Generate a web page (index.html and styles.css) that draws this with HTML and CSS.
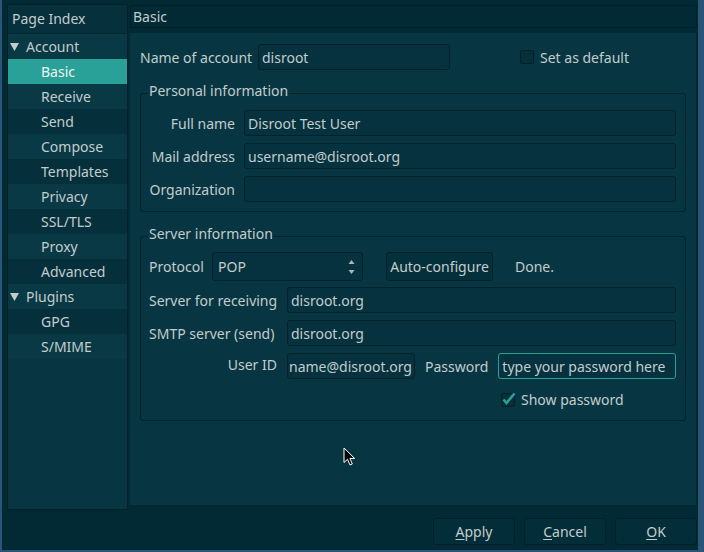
FILE: index.html
```html
<!DOCTYPE html>
<html>
<head>
<meta charset="utf-8">
<title>Account preferences</title>
<link rel="stylesheet" href="styles.css">
</head>
<body>
<div class="window">
  <div class="main">
    <div class="sidebar">
      <div class="side-head">Page Index</div>
      <div class="tree">
        <div class="row parent"><svg class="tri" width="9" height="8" viewBox="0 0 9 8"><polygon points="0,0 9,0 4.5,8" fill="#c3cccc"/></svg>Account</div>
        <div class="row child sel">Basic</div>
        <div class="row child">Receive</div>
        <div class="row child">Send</div>
        <div class="row child">Compose</div>
        <div class="row child">Templates</div>
        <div class="row child">Privacy</div>
        <div class="row child">SSL/TLS</div>
        <div class="row child">Proxy</div>
        <div class="row child">Advanced</div>
        <div class="row parent"><svg class="tri" width="9" height="8" viewBox="0 0 9 8"><polygon points="0,0 9,0 4.5,8" fill="#c3cccc"/></svg>Plugins</div>
        <div class="row child">GPG</div>
        <div class="row child">S/MIME</div>
      </div>
    </div>
    <div class="right">
      <div class="titlebar">Basic</div>
      <div class="pane">
        <div class="acct-row">
          <span class="acct-label">Name of account</span>
          <div class="input acct-input">disroot</div>
          <span class="check-wrap default-check"><span class="box"></span>Set as default</span>
        </div>

        <fieldset class="group personal">
          <legend>Personal information</legend>
          <div class="fields">
            <div class="frow"><span class="plabel">Full name</span><div class="input grow">Disroot Test User</div></div>
            <div class="frow"><span class="plabel">Mail address</span><div class="input grow">username@disroot.org</div></div>
            <div class="frow"><span class="plabel">Organization</span><div class="input grow"></div></div>
          </div>
        </fieldset>

        <fieldset class="group server">
          <legend>Server information</legend>
          <div class="srow proto-row">
            <span class="proto-label">Protocol</span>
            <div class="combo"><span>POP</span>
              <svg class="spin" width="7" height="16" viewBox="0 0 7 16"><polygon points="3.5,1 6.5,5 0.5,5" fill="#aab6b6"/><polygon points="0.5,11 6.5,11 3.5,15" fill="#aab6b6"/></svg>
            </div>
            <div class="btn auto">Auto-configure</div>
            <span class="done">Done.</span>
          </div>
          <div class="srow tight"><span class="slabel">Server for receiving</span><div class="input grow">disroot.org</div></div>
          <div class="srow"><span class="slabel">SMTP server (send)</span><div class="input grow">disroot.org</div></div>
          <div class="srow">
            <span class="slabel right">User ID</span>
            <div class="input uid">name@disroot.org</div>
            <span class="pw-label">Password</span>
            <div class="input grow focus">type your password here</div>
          </div>
          <div class="show-row">
            <span class="check-wrap"><svg class="chk" width="16" height="16" viewBox="0 0 16 16"><rect x="0.5" y="2.5" width="13" height="13" rx="2" fill="#05303b" stroke="#01202a"/><polyline points="2.5,8.5 5.5,12 13.5,2.5" fill="none" stroke="#2aa198" stroke-width="2.6"/></svg>Show password</span>
          </div>
        </fieldset>
      </div>
    </div>
  </div>
  <div class="buttons">
    <div class="btn dlg"><u>A</u>pply</div>
    <div class="btn dlg"><u>C</u>ancel</div>
    <div class="btn dlg"><u>O</u>K</div>
  </div>
  <svg class="cursor" width="14" height="20" viewBox="0 0 14 20"><path d="M1 1 L1 15.5 L4.5 12.2 L7 18 L9.3 17 L6.9 11.4 L11.6 11.4 Z" fill="#000" stroke="#fff" stroke-width="1"/></svg>
</div>
</body>
</html>
```
FILE: styles.css
```css
* { box-sizing: border-box; }
html, body { margin: 0; padding: 0; }
body {
  width: 704px;
  height: 552px;
  background: #2a5576;
  font-family: "Noto Sans", sans-serif;
  font-size: 14px;
  color: #c3cccc;
  overflow: hidden;
}
.window {
  position: relative;
  margin-left: 2px;
  width: 696px;
  height: 550px;
  background: #022a35;
  display: flex;
  flex-direction: column;
}
.main {
  display: flex;
  gap: 2px;
  padding: 4px 0 0 5px;
  height: 510px;
}
.sidebar {
  width: 121px;
  border: 1px solid #01222b;
  background: #073642;
  display: flex;
  flex-direction: column;
}
.side-head {
  height: 29px;
  line-height: 28px;
  padding-left: 4px;
  background: #05303c;
  border-bottom: 1px solid #03282f;
}
.row {
  height: 25px;
  line-height: 25px;
  white-space: nowrap;
}
.tree .row:nth-child(odd) { background: #093945; }
.tree .row:nth-child(even) { background: #05303b; }
.row.parent { padding-left: 2px; display: flex; align-items: center; }
.row.parent .tri { margin-right: 7px; }
.row.child { padding-left: 33px; }
.tree .row.sel { background: #2aa198; color: #eef3f2; }

.right {
  width: 567px;
  display: flex;
  flex-direction: column;
  padding: 1px 0 4px 0;
}
.titlebar {
  height: 23px;
  line-height: 21px;
  padding-left: 2px;
  border: 1px solid #01212a;
  background: #022a35;
}
.pane {
  flex: 1;
  margin-top: 5px;
  background: #073642;
  border-right: 1px solid #03262f;
  border-bottom: 1px solid #03262f;
  padding: 11px 10px 0 10px;
}
.input {
  height: 26px;
  line-height: 24px;
  border: 1px solid #01222b;
  border-radius: 3px;
  background: #05323e;
  padding: 1px 3px 0 3px;
  white-space: nowrap;
  overflow: hidden;
}
.input.focus { border-color: #2aa198; }
.grow { flex: 1; }

.acct-row { display: flex; align-items: center; height: 26px; }
.acct-label { width: 118px; }
.acct-input { width: 192px; }
.check-wrap { display: inline-flex; align-items: center; white-space: nowrap; }
.default-check { margin-left: 70px; }
.box {
  width: 14px;
  height: 14px;
  border: 1px solid #01202a;
  border-radius: 2px;
  background: #05303b;
  margin-right: 6px;
}

.group {
  margin: 11px 0 0 0;
  border: 1px solid #01232c;
  border-radius: 3px;
  padding: 0 9px 9px 7px;
  min-width: 0;
}
.group legend {
  padding: 0 1px 4px 1px;
  line-height: 20px;
}
.server { margin-top: 12px; padding-bottom: 13px; }

.fields { display: flex; flex-direction: column; gap: 7px; padding-top: 5px; }
.frow { display: flex; align-items: center; }
.plabel { width: 87px; text-align: right; margin-right: 9px; white-space: nowrap; }

.srow { display: flex; align-items: center; margin-top: 7px; }
.srow.tight { margin-top: 6px; }
.proto-row { margin-top: 4px; height: 29px; }
.proto-label { width: 64px; padding-left: 1px; }
.combo {
  width: 151px;
  height: 29px;
  border: 1px solid #01222b;
  border-radius: 3px;
  background: #05323e;
  display: flex;
  align-items: center;
  justify-content: space-between;
  padding: 0 7px 0 5px;
}
.btn {
  display: flex;
  align-items: center;
  justify-content: center;
  border: 1px solid #01222b;
  border-radius: 3px;
  background: #04303b;
  white-space: nowrap;
}
.auto { width: 107px; height: 29px; margin-left: 23px; }
.done { margin-left: 22px; }
.slabel { width: 139px; padding-left: 1px; white-space: nowrap; }
.slabel.right { width: 129px; text-align: right; margin-right: 10px; }
.uid { width: 128px; padding-left: 1px; }
.pw-label { margin: 0 10px; }
.show-row { margin-top: 12px; padding-left: 353px; height: 16px; display: flex; align-items: center; }
.chk { margin-right: 4px; }

.buttons {
  display: flex;
  justify-content: flex-end;
  gap: 9px;
  padding: 8px 1px 0 0;
}
.dlg { width: 82px; height: 27px; background: #032d38; border-color: #01202a; }
.dlg u { text-underline-offset: 2px; }

.cursor { position: absolute; left: 341px; top: 447px; }
```
